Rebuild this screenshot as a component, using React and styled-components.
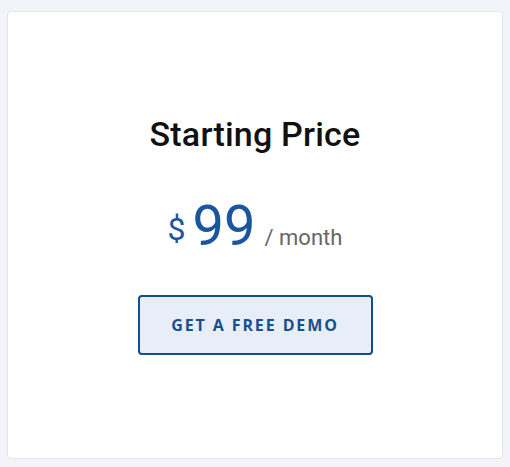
import React from 'react';
import styled, { createGlobalStyle } from 'styled-components';

const GlobalStyle = createGlobalStyle`
  html, body {
    margin: 0;
    padding: 0;
    background: #f3f4f9;
  }
  body {
    font-family: Roboto, "Liberation Sans", sans-serif;
  }
`

const Page = styled.div`
  padding: 11px 7px 8px 7px;
  height: 467px;
  box-sizing: border-box;
`

const Card = styled.div`
  height: 100%;
  box-sizing: border-box;
  background: #fff;
  border: 1px solid #e3e5ec;
  border-radius: 4px;
  display: flex;
  flex-direction: column;
  align-items: center;
  padding-top: 100px;
`

const Title = styled.h2`
  margin: 0;
  font-size: 34px;
  font-weight: 500;
  color: #111;
  line-height: 44px;
  letter-spacing: 0.2px;
`

const PriceRow = styled.div`
  display: flex;
  align-items: baseline;
  margin-top: 40px;
  color: #1a55a0;
`

const Currency = styled.span`
  font-size: 32px;
  margin-right: 7px;
  position: relative;
  top: -5px;
`

const Amount = styled.span`
  font-size: 56px;
  line-height: 60px;
`

const Period = styled.span`
  font-size: 22px;
  color: #666;
  margin-left: 9px;
`

const DemoButton = styled.button`
  margin-top: 39px;
  width: 235px;
  height: 60px;
  box-sizing: border-box;
  background: #e7eef8;
  border: 2px solid #124d8c;
  border-radius: 4px;
  color: #15508f;
  font-family: "Open Sans", sans-serif;
  font-weight: 700;
  font-size: 16px;
  letter-spacing: 1.9px;
  cursor: pointer;
`

export default function App() {
  return (
    <>
      <GlobalStyle />
      <Page>
        <Card>
          <Title>Starting Price</Title>
          <PriceRow>
            <Currency>$</Currency>
            <Amount>99</Amount>
            <Period>/ month</Period>
          </PriceRow>
          <DemoButton>GET A FREE DEMO</DemoButton>
        </Card>
      </Page>
    </>
  );
}
